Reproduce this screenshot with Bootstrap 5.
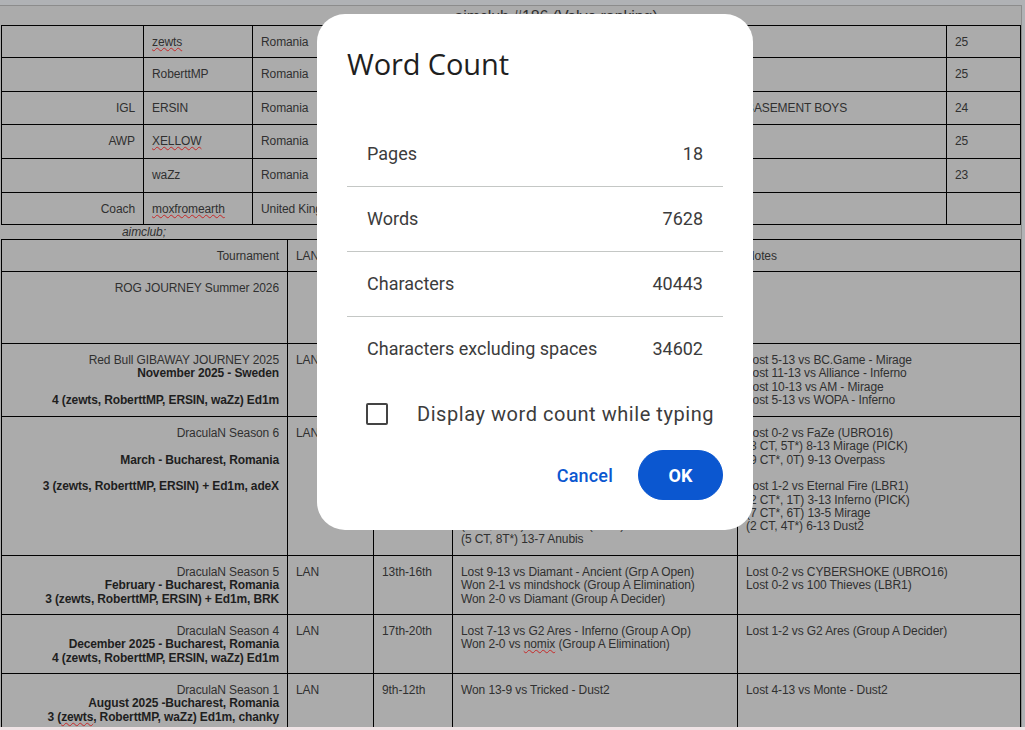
<!DOCTYPE html>
<html lang="en">
<head>
  <meta charset="UTF-8" />
  <meta name="viewport" content="width=device-width, initial-scale=1.0"/>
  <title>Word Count</title>
  <link href="https://cdn.jsdelivr.net/npm/bootstrap@5.3.0/dist/css/bootstrap.min.css" rel="stylesheet">
  <style>
    html, body { height: 730px; overflow: hidden; }
    body { background: #b0b2b5; position: relative; font-family: "Liberation Sans", Arial, sans-serif; }
    .top-strip { height: 5px; }
    .bottom-strip { height: 3px; background: #efe3e5; }
    .paper { height: 722px; width: 1022px; overflow: hidden; background: #ababab; border-top: 1px solid #8c8c8c; border-right: 1px solid #8c8c8c; color: #303030; font-size: 12px; line-height: 13.33px; padding-left: 1px; letter-spacing: -0.1px; }
    .doc-title { height: 19px; font-size: 16px; line-height: 18px; padding-top: 2px; text-align: center; padding-left: 90px; color: #303030; }
    .sheet { table-layout: fixed; width: 1019px; --bs-table-bg: transparent; --bs-table-color: #303030; --bs-table-border-color: #000; border-color: #000; }
    .sheet > tbody > tr > td { padding: 10px 8px 0; font-size: 12px; line-height: 13.33px; vertical-align: top; border-color: #000; color: #303030; background: transparent; box-shadow: none; }
    .sheet > tbody > tr > td.cell-end { vertical-align: bottom; padding-bottom: 9px; }
    .sheet b { color: #1e1e1e; font-weight: 700; letter-spacing: -0.13px; }
    .typo { text-decoration: underline wavy #c62828 1px; text-underline-offset: 1px; }
    .caption-line { height: 14px; line-height: 14px; font-style: italic; padding-left: 121px; }
    .rh-32 { height: 32px; }
    .rh-33 { height: 33px; }
    .rh-34 { height: 34px; }
    .rh-59 { height: 59px; }
    .rh-72 { height: 72px; }
    .rh-73 { height: 73px; }
    .rh-139 { height: 139px; }

    .word-dialog { position: absolute; left: 317px; top: 14px; width: 436px; height: 516px; background: #fff; border-radius: 28px; padding: 0 30px; font-family: Roboto, "Liberation Sans", sans-serif; color: #3c3c3c; }
    .word-title { font-family: "Open Sans", sans-serif; font-size: 29px; line-height: 36px; margin: 32px 0 0; font-weight: 400; color: #1f1f1f; letter-spacing: -0.1px; }
    .stats { margin-top: 39px; }
    .stat-row { height: 65px; padding: 0 20px; font-size: 18px; line-height: 24px; }
    .stat-row + .stat-row { border-top: 1px solid #c4c7c5; }
    .count-opt { margin-top: 18px; padding-left: 19px; gap: 29px; font-size: 20px; letter-spacing: 0.55px; height: 30px; }
    .tick-box { width: 22px; height: 22px; border: 2px solid #444; border-radius: 2px; }
    .actions { margin-top: 21px; gap: 25px; }
    .btn-cancel { font-size: 18px; font-weight: 500; letter-spacing: 0.2px; color: #0b57d0; padding: 0; border: 0; }
    .btn-ok { width: 85px; height: 50px; font-size: 18px; font-weight: 700; background: #0b57d0; border-color: #0b57d0; padding: 0; }
  </style>
</head>
<body>
<div class="top-strip"></div>

<div class="paper">
  <div class="doc-title">aimclub #186 (Valve ranking)</div>

  <!-- roster -->
  <table class="table table-bordered sheet mb-0">
    <colgroup>
      <col style="width:142px"><col style="width:109px"><col style="width:198px"><col style="width:287px"><col style="width:209px"><col style="width:74px">
    </colgroup>
    <tbody>
      <tr class="rh-32"><td class="text-end"></td><td><span class="typo">zewts</span></td><td>Romania</td><td></td><td></td><td>25</td></tr>
      <tr class="rh-34"><td class="text-end"></td><td>RoberttMP</td><td>Romania</td><td></td><td></td><td>25</td></tr>
      <tr class="rh-33"><td class="text-end">IGL</td><td>ERSIN</td><td>Romania</td><td></td><td>BASEMENT BOYS</td><td>24</td></tr>
      <tr class="rh-34"><td class="text-end">AWP</td><td><span class="typo">XELLOW</span></td><td>Romania</td><td></td><td></td><td>25</td></tr>
      <tr class="rh-34"><td class="text-end"></td><td>waZz</td><td>Romania</td><td></td><td></td><td>23</td></tr>
      <tr class="rh-32"><td class="text-end">Coach</td><td><span class="typo">moxfromearth</span></td><td>United Kingdom</td><td></td><td></td><td></td></tr>
    </tbody>
  </table>

  <div class="caption-line">aimclub;</div>

  <!-- results -->
  <table class="table table-bordered sheet mb-0">
    <colgroup>
      <col style="width:286px"><col style="width:86px"><col style="width:79px"><col style="width:285px"><col style="width:283px">
    </colgroup>
    <tbody>
      <tr class="rh-32"><td class="text-end">Tournament</td><td>LAN</td><td></td><td></td><td>Notes</td></tr>
      <tr class="rh-72"><td class="text-end">ROG JOURNEY Summer 2026</td><td></td><td></td><td></td><td></td></tr>
      <tr class="rh-73">
        <td class="text-end">Red Bull GIBAWAY JOURNEY 2025<br><b>November 2025 - Sweden</b><br><br><b>4 (zewts, RoberttMP, ERSIN, waZz) Ed1m</b></td>
        <td>LAN</td><td></td><td></td>
        <td>Lost 5-13 vs BC.Game - Mirage<br>Lost 11-13 vs Alliance - Inferno<br>Lost 10-13 vs AM - Mirage<br>Lost 5-13 vs WOPA - Inferno</td>
      </tr>
      <tr class="rh-139">
        <td class="text-end">DraculaN Season 6<br><br><b>March - Bucharest, Romania</b><br><br><b>3 (zewts, RoberttMP, ERSIN) + Ed1m, adeX</b></td>
        <td>LAN</td><td></td>
        <td class="cell-end">(5 CT, 10T*) 13-8 Dust2 (PICK)<br>(5 CT, 8T*) 13-7 Anubis</td>
        <td>Lost 0-2 vs FaZe (UBRO16)<br>(8 CT, 5T*) 8-13 Mirage (PICK)<br>(9 CT*, 0T) 9-13 Overpass<br><br>Lost 1-2 vs Eternal Fire (LBR1)<br>(2 CT*, 1T) 3-13 Inferno (PICK)<br>(7 CT*, 6T) 13-5 Mirage<br>(2 CT, 4T*) 6-13 Dust2</td>
      </tr>
      <tr class="rh-59">
        <td class="text-end">DraculaN Season 5<br><b>February - Bucharest, Romania</b><br><b>3 (zewts, RoberttMP, ERSIN) + Ed1m, BRK</b></td>
        <td>LAN</td><td>13th-16th</td>
        <td>Lost 9-13 vs Diamant - Ancient (Grp A Open)<br>Won 2-1 vs mindshock (Group A Elimination)<br>Won 2-0 vs Diamant (Group A Decider)</td>
        <td>Lost 0-2 vs CYBERSHOKE (UBRO16)<br>Lost 0-2 vs 100 Thieves (LBR1)</td>
      </tr>
      <tr class="rh-59">
        <td class="text-end">DraculaN Season 4<br><b>December 2025 - Bucharest, Romania</b><br><b>4 (zewts, RoberttMP, ERSIN, waZz) Ed1m</b></td>
        <td>LAN</td><td>17th-20th</td>
        <td>Lost 7-13 vs G2 Ares - Inferno (Group A Op)<br>Won 2-0 vs <span class="typo">nomix</span> (Group A Elimination)</td>
        <td>Lost 1-2 vs G2 Ares (Group A Decider)</td>
      </tr>
      <tr class="rh-59">
        <td class="text-end">DraculaN Season 1<br><b>August 2025 -Bucharest, Romania</b><br><b>3 (<span class="typo">zewts</span>, RoberttMP, waZz) Ed1m, chanky</b></td>
        <td>LAN</td><td>9th-12th</td>
        <td>Won 13-9 vs Tricked - Dust2</td>
        <td>Lost 4-13 vs Monte - Dust2</td>
      </tr>
    </tbody>
  </table>
</div>

<div class="bottom-strip"></div>

<!-- dialog -->
<div class="word-dialog shadow-none">
  <h2 class="word-title">Word Count</h2>
  <div class="stats">
    <div class="stat-row d-flex justify-content-between align-items-center"><span>Pages</span><span>18</span></div>
    <div class="stat-row d-flex justify-content-between align-items-center"><span>Words</span><span>7628</span></div>
    <div class="stat-row d-flex justify-content-between align-items-center"><span>Characters</span><span>40443</span></div>
    <div class="stat-row d-flex justify-content-between align-items-center"><span>Characters excluding spaces</span><span>34602</span></div>
  </div>
  <div class="count-opt d-flex align-items-center"><span class="tick-box"></span><span>Display word count while typing</span></div>
  <div class="actions d-flex justify-content-end align-items-center">
    <button type="button" class="btn btn-link text-decoration-none btn-cancel">Cancel</button>
    <button type="button" class="btn btn-primary rounded-pill btn-ok">OK</button>
  </div>
</div>

<script src="https://cdn.jsdelivr.net/npm/bootstrap@5.3.0/dist/js/bootstrap.bundle.min.js"></script>
</body>
</html>
